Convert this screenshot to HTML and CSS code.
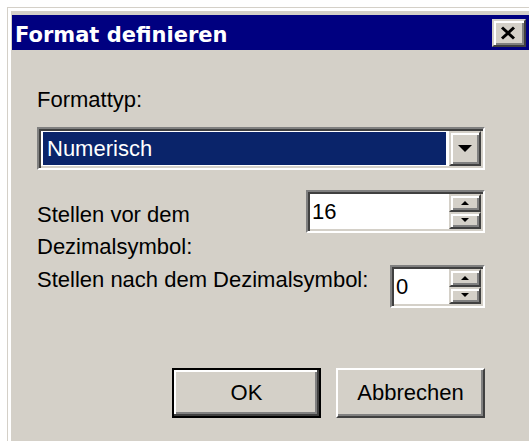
FILE: index.html
```html
<!DOCTYPE html>
<html lang="de">
<head>
<meta charset="utf-8">
<title>Format definieren</title>
<link rel="stylesheet" href="styles.css">
</head>
<body>
<div class="window">
  <div class="titlebar">
    <span class="title">Format definieren</span>
    <button class="caption-btn" type="button" aria-label="Schließen">
      <svg width="16" height="14" viewBox="0 0 16 14"><path d="M2 1.5 L14 12.5 M14 1.5 L2 12.5" stroke="#000" stroke-width="3" fill="none"/></svg>
    </button>
  </div>

  <div class="dialog-body">
    <div class="label label-type">Formattyp:</div>

    <div class="combo">
      <div class="combo-field"><span class="combo-value">Numerisch</span></div>
      <div class="combo-btn">
        <svg width="14" height="7" viewBox="0 0 14 7"><polygon points="0,0 14,0 7,7" fill="#000"/></svg>
      </div>
    </div>

    <div class="field-row row-before">
      <label class="label label-wrap">Stellen vor dem Dezimalsymbol:</label>
      <div class="spin spin-wide">
        <span class="spin-value">16</span>
        <div class="spin-btns">
          <span class="spin-btn"><svg width="8" height="4" viewBox="0 0 8 4"><polygon points="4,0 8,4 0,4" fill="#000"/></svg></span>
          <span class="spin-btn"><svg width="8" height="4" viewBox="0 0 8 4"><polygon points="0,0 8,0 4,4" fill="#000"/></svg></span>
        </div>
      </div>
    </div>

    <div class="field-row row-after">
      <label class="label">Stellen nach dem Dezimalsymbol:</label>
      <div class="spin spin-narrow">
        <span class="spin-value">0</span>
        <div class="spin-btns">
          <span class="spin-btn"><svg width="8" height="4" viewBox="0 0 8 4"><polygon points="4,0 8,4 0,4" fill="#000"/></svg></span>
          <span class="spin-btn"><svg width="8" height="4" viewBox="0 0 8 4"><polygon points="0,0 8,0 4,4" fill="#000"/></svg></span>
        </div>
      </div>
    </div>

    <div class="actions">
      <button class="btn btn-default" type="button">OK</button>
      <button class="btn" type="button">Abbrechen</button>
    </div>
  </div>
</div>
</body>
</html>
```

FILE: styles.css
```css
html, body {
  margin: 0;
  height: 100%;
  overflow: hidden;
  background: #ffffff;
}

body {
  font-family: "Liberation Sans", Arial, sans-serif;
  font-size: 22px;
  color: #000;
}

/* dialog frame; its right and bottom edges run past the viewport */
.window {
  box-sizing: border-box;
  width: calc(100% - 7px);
  height: calc(100% - 7px);
  margin: 7px 0 0 7px;
  padding: 7px 0 0 4px;
  background: #d4d0c8;
  border-top: 1px solid #d4d0c8;
  border-left: 1px solid #d4d0c8;
  box-shadow: inset 3px 3px 0 #ffffff;
}

/* caption */
.titlebar {
  display: flex;
  align-items: flex-start;
  height: 35px;
  background: #000080;
  color: #fff;
}

.title {
  flex: 1;
  padding: 6px 0 0 3px;
  font-family: "DejaVu Sans", Tahoma, sans-serif;
  font-weight: bold;
  font-size: 21px;
  line-height: 29px;
  white-space: nowrap;
}

.caption-btn,
.combo-btn,
.spin-btn {
  box-sizing: border-box;
  display: flex;
  align-items: center;
  justify-content: center;
  padding: 0;
  background: #d4d0c8;
  border: 2px solid;
  border-color: #d4d0c8 #404040 #404040 #d4d0c8;
  box-shadow: inset 2px 2px 0 #ffffff, inset -2px -2px 0 #808080;
}

.caption-btn {
  width: 34px;
  height: 28px;
  margin: 4px 3px 0 0;
}

.caption-btn svg {
  margin: 0 2px 1px 0;
}

/* content */
.dialog-body {
  padding: 0 44px 0 25px;
}

.label {
  display: block;
  line-height: 32px;
}

.label-type {
  margin-top: 34px;
}

/* sunken field border shared by combo and spin boxes */
.combo,
.spin {
  box-sizing: border-box;
  display: flex;
  height: 43px;
  padding: 2px;
  background: #fff;
  border: 2px solid;
  border-color: #808080 #ffffff #ffffff #808080;
  box-shadow: inset 2px 2px 0 #404040, inset -2px -2px 0 #d4d0c8;
}

.combo {
  margin-top: 11px;
}

.combo-field {
  flex: 1;
  display: flex;
  padding: 1px 3px 1px 2px;
}

.combo-value {
  flex: 1;
  padding-left: 4px;
  background: #0a246a;
  color: #fff;
  line-height: 33px;
}

.combo-btn {
  width: 32px;
}

.field-row {
  display: flex;
  align-items: flex-start;
  justify-content: space-between;
}

.row-before {
  margin-top: 20px;
}

.row-before .label {
  padding-top: 9px;
  max-width: 240px;
}

.row-after {
  margin-top: 1px;
}

.row-after .spin {
  margin-top: 1px;
}

.spin-wide {
  width: 179px;
}

.spin-narrow {
  width: 95px;
}

.spin-value {
  flex: 1;
  padding-left: 2px;
  line-height: 35px;
}

.spin-btns {
  display: flex;
  flex-direction: column;
  width: 32px;
}

.spin-btn {
  flex: 1;
}

/* push buttons */
.actions {
  display: flex;
  gap: 15px;
  margin-top: 60px;
  padding-left: 135px;
}

.btn {
  box-sizing: border-box;
  width: 160px;
  height: 50px;
  padding: 0;
  font-family: inherit;
  font-size: 22px;
  color: #000;
  background: #d4d0c8;
  border: 2px solid;
  border-color: #ffffff #404040 #404040 #ffffff;
  box-shadow: inset -2px -2px 0 #808080;
}

.btn-default {
  border-color: #000;
  box-shadow: inset -2px -2px 0 #404040, inset 2px 2px 0 #ffffff, inset -4px -4px 0 #808080;
}
```
